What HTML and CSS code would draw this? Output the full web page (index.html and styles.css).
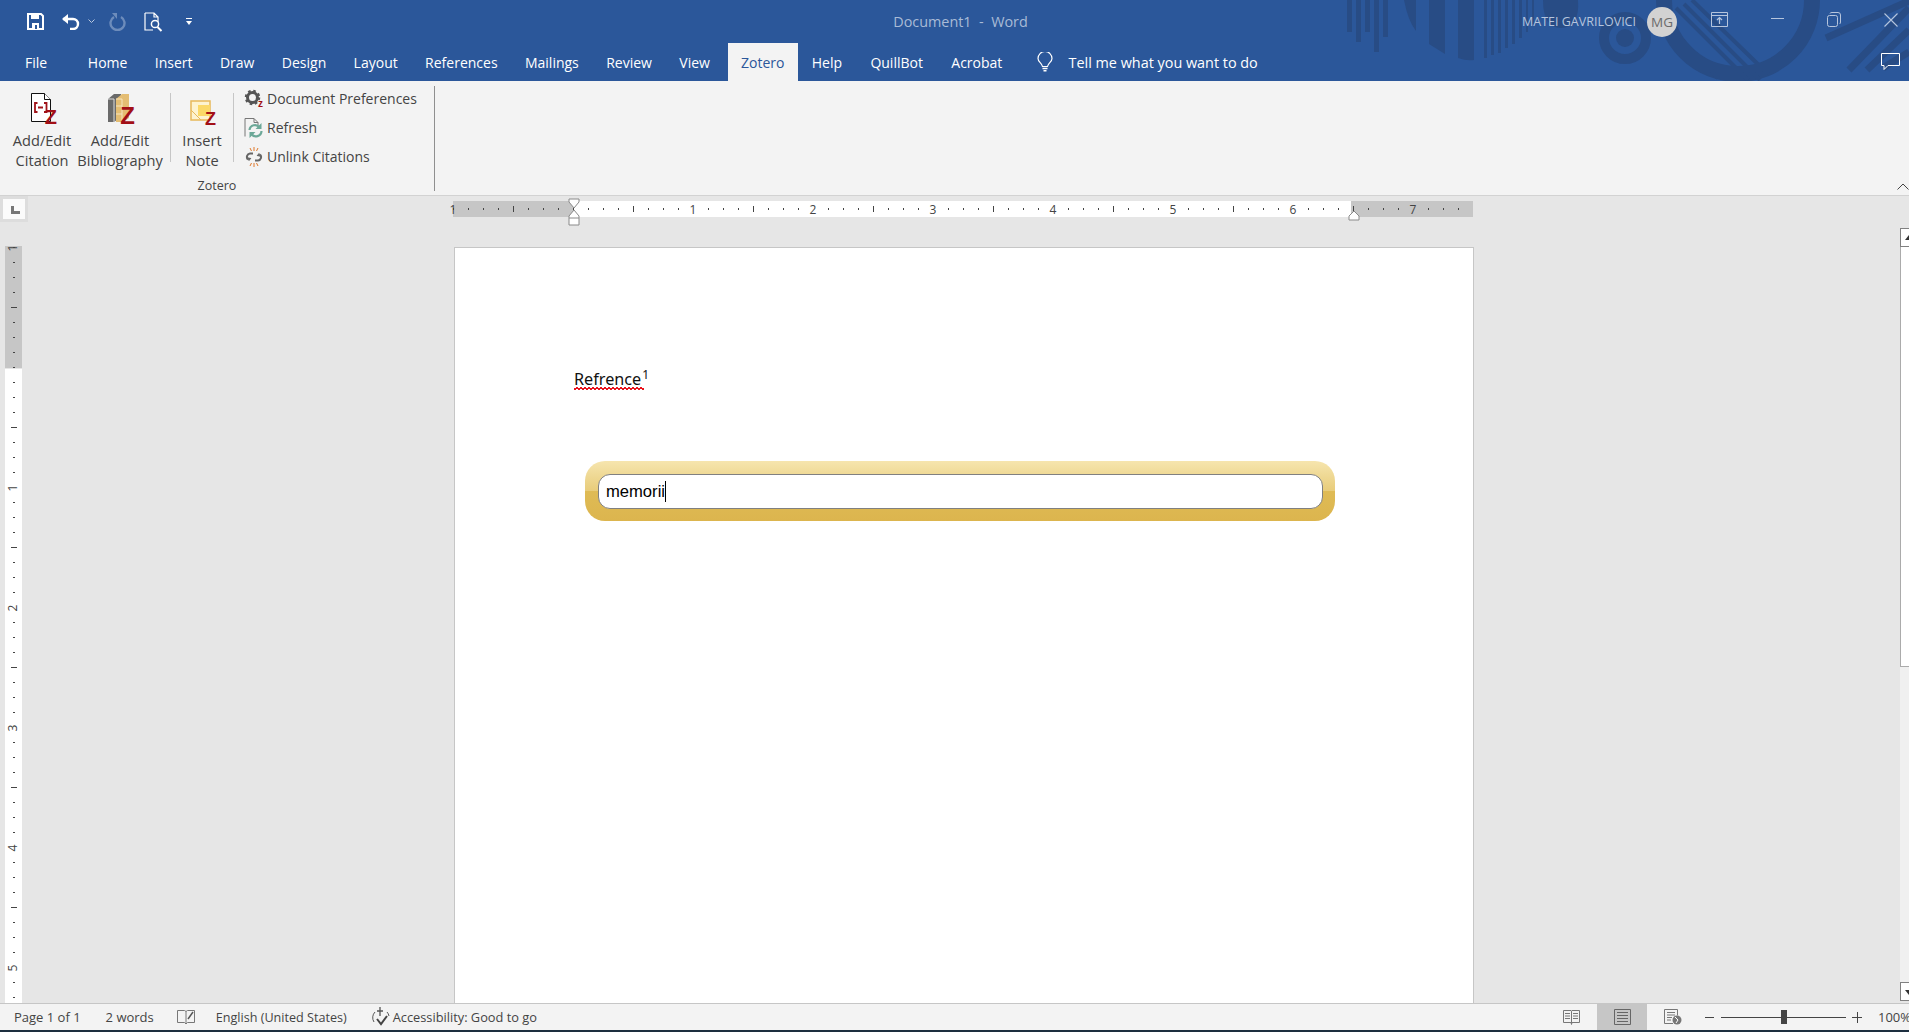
FILE: index.html
```html
<!DOCTYPE html>
<html lang="en">
<head>
  <meta charset="UTF-8" />
  <title>Document1 - Word</title>
  <link rel="stylesheet" href="styles.css">
</head>
<body>

  <!-- Blue header: title bar and tabs -->
  <header class="head">
    <svg class="deco" viewBox="1309 0 600 81" width="600" height="81">
      <g fill="#284c85">
        <rect x="1347" width="5" height="32"/><rect x="1356" width="5" height="42"/>
        <rect x="1365" width="5" height="32"/><rect x="1374" width="5" height="52"/>
        <rect x="1383" width="5" height="37"/>
        <path d="M1404 0h12v31q-8-10-12-31z"/>
        <path d="M1429 0h16v54l-16-10z"/>
        <path d="M1458 0h16v60q-8 1-16-2z"/>
        <rect x="1484" width="3" height="58"/><rect x="1491" width="3" height="55"/>
        <rect x="1498" width="3" height="53"/><rect x="1505" width="3" height="48"/>
        <rect x="1512" width="3" height="44"/><rect x="1519" width="3" height="38"/>
        <rect x="1526" width="2" height="32"/><rect x="1532" width="2" height="24"/>
        <path d="M1543 0h35q2 28-17 28q-18 0-18-28z"/>
        <circle cx="1625" cy="38" r="9"/>
      </g>
      <g fill="none" stroke="#284c85">
        <circle cx="1625" cy="38" r="21" stroke-width="10"/>
        <circle cx="1738" cy="0" r="74" stroke-width="16"/>
        <path stroke-width="4" d="M1676 8l72 72M1684 4l76 76M1692 0l76 74M1680 38l38 40"/>
        <path stroke-width="7" d="M1911 0l-85 38M1909 8l-60 62M1909 30l-42 40M1909 52l-26 16"/>
      </g>
    </svg>

    <div class="titlebar">
      <div class="qat">
        <svg class="qat-save" width="17" height="17" viewBox="0 0 17 17"><path d="M1 1h13l2 2v13H1z" fill="none" stroke="#fff" stroke-width="2"/><rect x="4" y="1" width="8" height="5" fill="#fff"/><rect x="5" y="10" width="7" height="6" fill="#fff"/><rect x="8" y="12" width="2" height="4" fill="#2b579a"/></svg>
        <svg class="qat-undo" width="19" height="16" viewBox="0 0 19 16"><path d="M2 5h10a5 5 0 0 1 0 10H9" fill="none" stroke="#fff" stroke-width="2.4"/><path d="M7 0L1 5l6 5z" fill="#fff"/></svg>
        <svg class="qat-drop" width="7" height="5" viewBox="0 0 7 5"><path d="M.5.5l3 3 3-3" fill="none" stroke="#b9c8df"/></svg>
        <svg class="qat-redo" width="17" height="18" viewBox="0 0 17 18"><path d="M12 4a7 7 0 1 1-7 0" fill="none" stroke="#6d8cbb" stroke-width="2.4"/><path d="M3 0h5v6z" fill="#6d8cbb"/></svg>
        <svg class="qat-print" width="20" height="20" viewBox="0 0 20 20"><path d="M1 1h9l4 4v5M1 1v17h8M10 1v4h4" fill="none" stroke="#fff" stroke-width="1.2"/><circle cx="11" cy="12" r="3.6" fill="none" stroke="#fff" stroke-width="1.5"/><path d="M13.5 15l4 4" stroke="#fff" stroke-width="2"/></svg>
        <svg class="qat-more" width="6" height="8" viewBox="0 0 6 8"><rect width="6" height="1" fill="#fff"/><path d="M0 3h6L3 7z" fill="#fff"/></svg>
      </div>
      <div class="doc-title">Document1&nbsp; - &nbsp;Word</div>
      <div class="win">
        <span class="user">MATEI GAVRILOVICI</span>
        <span class="avatar">MG</span>
        <svg class="win-display" width="17" height="15" viewBox="0 0 17 15"><path d="M.5.5h16v14H.5zM.5 3.5h16" fill="none" stroke="#b6c5dd"/><path d="M8.5 12V6M6 8l2.500-2.500L11 8" fill="none" stroke="#b6c5dd" stroke-width="1.200"/></svg>
        <svg class="win-min" width="13" height="2" viewBox="0 0 13 2"><rect width="13" height="1" fill="#b6c5dd"/></svg>
        <svg class="win-restore" width="14" height="15" viewBox="0 0 14 15"><rect x=".5" y="3.500" width="10" height="11" rx="2" fill="none" stroke="#b6c5dd"/><path d="M3 1.500q0-1 2-1h6q2.500 0 2.500 2.500v7q0 1.500-1 2" fill="none" stroke="#b6c5dd"/></svg>
        <svg class="win-close" width="14" height="14" viewBox="0 0 14 14"><path d="M.5.500l13 13M13.500.500l-13 13" stroke="#b6c5dd" stroke-width="1.100"/></svg>
      </div>
    </div>

    <nav class="tabs">
      <span class="tab tab-file">File</span>
      <span class="tab">Home</span>
      <span class="tab">Insert</span>
      <span class="tab">Draw</span>
      <span class="tab">Design</span>
      <span class="tab">Layout</span>
      <span class="tab">References</span>
      <span class="tab">Mailings</span>
      <span class="tab">Review</span>
      <span class="tab">View</span>
      <span class="tab active">Zotero</span>
      <span class="tab">Help</span>
      <span class="tab">QuillBot</span>
      <span class="tab">Acrobat</span>
      <svg class="bulb" width="16" height="20" viewBox="0 0 16 20"><path d="M5.500 14.500C5 11 1 10 1 6.500a7 7 0 0 1 14 0c0 3.500-4 4.500-4.500 8z" fill="none" stroke="#fff" stroke-width="1.200"/><path d="M5.500 16.500h5M6.500 18.800h3" stroke="#fff" stroke-width="1.400"/></svg>
      <span class="tell">Tell me what you want to do</span>
      <svg class="comment" width="19" height="17" viewBox="0 0 19 17"><path d="M.5.500h18v12H7l-4 4v-4H.5z" fill="none" stroke="#fff"/></svg>
    </nav>
  </header>

  <!-- Zotero ribbon -->
  <section class="ribbon">
    <div class="group">
      <div class="group-row">
        <div class="large large-cite">
          <svg class="large-icon" width="26" height="37" viewBox="0 0 26 37">
            <path d="M.5.500h13l6 6v22H.5z" fill="#fff" stroke="#111"/>
            <path d="M13.500.500v6h6" fill="#fff" stroke="#111"/>
            <path d="M6.500 10h-2.500v9h2.500M13 10h2.500v9H13M7 14.500h5" fill="none" stroke="#a0141a" stroke-width="1.800"/>
            <text class="zed" x="26" y="31" text-anchor="end" font-size="20">Z</text>
          </svg>
          <span>Add/Edit</span><span>Citation</span>
        </div>
        <div class="large large-bib">
          <svg class="large-icon" width="28" height="37" viewBox="0 0 28 37">
            <path d="M1 6l6-5h7v23l-7 5H1z" fill="#6a6a6a"/>
            <path d="M1 6h6v23" fill="none" stroke="#dcdcdc"/>
            <path d="M9 6l6-5h7v24l-6 4H9z" fill="#e4bd73"/>
            <path d="M9 6h6v23M9 13h6M9 21h6" fill="none" stroke="#f6e5c0"/>
            <text class="zed" x="28" y="31" text-anchor="end" font-size="24">Z</text>
          </svg>
          <span>Add/Edit</span><span>Bibliography</span>
        </div>
        <div class="sep"></div>
        <div class="large large-note">
          <svg class="large-icon" width="26" height="29" viewBox="0 0 26 29">
            <rect x="1" y="1" width="19" height="19" fill="#fdf3d0" stroke="#e8b95a" stroke-width="1.500"/>
            <rect x="8" y="5" width="12" height="11" fill="#fbd968"/>
            <path d="M1 10l10 10" stroke="#e8b95a"/>
            <text class="zed" x="26" y="25" text-anchor="end" font-size="18">Z</text>
          </svg>
          <span>Insert</span><span>Note</span>
        </div>
        <div class="sep"></div>
        <div class="small-list">
          <div class="small">
            <svg width="18" height="22" viewBox="0 -2 18 22"><circle cx="7.500" cy="7.500" r="5" fill="none" stroke="#555" stroke-width="3"/><circle cx="7.500" cy="7.500" r="6.500" fill="none" stroke="#555" stroke-width="2.500" stroke-dasharray="2.500 2.600"/><text class="zed" x="18" y="17" text-anchor="end" font-size="10">z</text></svg>
            <span>Document Preferences</span>
          </div>
          <div class="small">
            <svg width="19" height="20" viewBox="0 0 19 20"><path d="M.5 18.500V.500h9l4 4v3M9.500.500v4h4" fill="none" stroke="#777"/><path d="M5 12a5.500 5.500 0 0 1 10-2.500" fill="none" stroke="#6ca898" stroke-width="2.200"/><path d="M17 13a5.500 5.500 0 0 1-10 3" fill="none" stroke="#6ca898" stroke-width="2.200"/><path d="M17 5v6h-6zM5 20v-6h6z" fill="#6ca898"/></svg>
            <span>Refresh</span>
          </div>
          <div class="small">
            <svg width="18" height="20" viewBox="0 0 18 20"><path d="M8 6.500H5a3.500 3.500 0 0 0-2 6M10 13.500h3a3.500 3.500 0 0 0 2-6" fill="none" stroke="#666" stroke-width="2"/><path d="M3 10.500l1 3 2-2.500M15 9.500l-1-3-2 2.500" fill="#666" stroke="#666"/><path d="M9 0v4M9 16v4M5 1l1.500 3M13 1l-1.500 3M5 19l1.500-3M13 19l-1.500-3" stroke="#e0782a"/></svg>
            <span>Unlink Citations</span>
          </div>
        </div>
      </div>
      <div class="group-label">Zotero</div>
    </div>
    <div class="group-sep"></div>
    <svg class="collapse" width="12" height="7" viewBox="0 0 12 7"><path d="M.5 6.500L6 1l5.500 5.500" fill="none" stroke="#444"/></svg>
  </section>

  <!-- Rulers, page and scrollbar -->
  <main class="workspace">
    <div class="vside">
      <div class="corner"><div class="tab-stop"><i></i></div></div>
      <div class="vruler">
        <span class="vnum off"><b>1</b></span>
        <span class="vnum"></span>
        <span class="vnum"><b>1</b></span>
        <span class="vnum"><b>2</b></span>
        <span class="vnum"><b>3</b></span>
        <span class="vnum"><b>4</b></span>
        <span class="vnum"><b>5</b></span>
      </div>
    </div>

    <div class="doc-area">
      <div class="hruler">
        <div class="hnums">
          <span class="off"><b>1</b></span>
          <span></span>
          <span><b>1</b></span>
          <span><b>2</b></span>
          <span><b>3</b></span>
          <span><b>4</b></span>
          <span><b>5</b></span>
          <span><b>6</b></span>
          <span class="off"><b>7</b></span>
        </div>
        <svg class="marker marker-left" width="12" height="28" viewBox="0 0 12 28"><path d="M1 1h10v3L6 10 1 4zM6 12l5 6v9H1v-9zM1 20h10" fill="#fff" stroke="#8a8a8a"/></svg>
        <svg class="marker marker-right" width="12" height="11" viewBox="0 0 12 11"><path d="M6 1l5 5v4H1V6z" fill="#fff" stroke="#8a8a8a"/></svg>
      </div>
      <article class="page">
        <p class="para"><span class="misspelt">Refrence</span><sup>1</sup></p>
        <div class="zotero-bar">
          <div class="zotero-input"><span>memorii</span><i class="caret"></i></div>
        </div>
      </article>
    </div>

    <div class="vscroll">
      <div class="sb-btn sb-up"></div>
      <div class="sb-thumb"></div>
      <div class="sb-track"></div>
      <div class="sb-btn sb-down"></div>
    </div>
  </main>

  <!-- Status bar -->
  <footer class="status">
    <span class="st-page">Page 1 of 1</span>
    <span class="st-words">2 words</span>
    <svg class="st-proof" width="18" height="16" viewBox="0 0 18 16"><path d="M.5 1.500h7l1.500 1 1.500-1h7v12h-7L9 15l-1.500-1.500h-7zM9 2.500V15" fill="none" stroke="#777"/><path d="M11 10l5-7" stroke="#555" stroke-width="1.500"/></svg>
    <span class="st-lang">English (United States)</span>
    <svg class="st-access" width="20" height="20" viewBox="0 0 20 20"><path d="M4 5a8 8 0 0 0-1 10M16 5a8 8 0 0 1 2 4" fill="none" stroke="#555"/><path d="M9 0v9M6 4h6" stroke="#555" stroke-width="1.300"/><path d="M6 12l4 5 6-8" fill="none" stroke="#444" stroke-width="2"/></svg>
    <span class="st-acc-text">Accessibility: Good to go</span>

    <div class="st-right">
      <svg width="17" height="15" viewBox="0 0 17 15"><path d="M.5.500h7.500l.5 1 .5-1h7.500v12h-7.500l-.5 2-.5-2H.5zM8.500 1.500v12M2 3.500h5M2 6h5M2 8.500h5M10 3.500h5M10 6h5M10 8.500h5" fill="none" stroke="#777"/></svg>
      <div class="view-active"><svg width="17" height="16" viewBox="0 0 17 16"><path d="M.5.500h16v15H.5zM3 3.500h11M3 6.500h11M3 9.500h11M3 12.500h11" fill="none" stroke="#666"/></svg></div>
      <svg width="18" height="16" viewBox="0 0 18 16"><path d="M9 14.500H.5V.500h13v6M3 3.500h8M3 6h8M3 8.500h5M3 11h4" fill="none" stroke="#777"/><circle cx="13" cy="11" r="4.500" fill="#777"/><path d="M11 8l3 3-2 3" fill="none" stroke="#fff"/></svg>
      <div class="zoom">
        <i class="zoom-minus"></i>
        <div class="slider"><i></i></div>
        <i class="zoom-plus"></i>
      </div>
      <span class="st-zoom">100%</span>
    </div>
  </footer>
  <div class="taskbar-edge"></div>

</body>
</html>
```

FILE: styles.css
```css
/* General styling */
* {
  box-sizing: border-box;
}

html,
body {
  height: 100%;
}

body {
  margin: 0;
  display: flex;
  flex-direction: column;
  width: 1909px;
  height: 1032px;
  overflow: hidden;
  font-family: "Open Sans", "Noto Sans", sans-serif;
  font-size: 13.5px;
  color: #444;
  background: #e6e6e6;
}

svg {
  display: block;
  flex: none;
}

/* Header */
.head {
  position: relative;
  height: 81px;
  flex: none;
  background: #2b579a;
  overflow: hidden;
}

.deco {
  position: absolute;
  top: 0;
  right: 0;
}

.titlebar {
  position: relative;
  display: flex;
  align-items: center;
  height: 43px;
}

.qat {
  flex: 1;
  display: flex;
  align-items: center;
  padding-left: 27px;
}

.qat-undo { margin-left: 17px; }
.qat-drop { margin-left: 8px; }
.qat-redo { margin-left: 14px; }
.qat-print { margin-left: 18px; }
.qat-more { margin-left: 22px; }

.doc-title {
  margin-right: 15px;
  font-size: 14.4px;
  color: #a9bbd6;
}

.win {
  flex: 1;
  display: flex;
  align-items: center;
  justify-content: flex-end;
}

.user {
  font-size: 12.5px;
  color: #b6c5dd;
}

.avatar {
  display: flex;
  align-items: center;
  justify-content: center;
  width: 30px;
  height: 30px;
  margin-left: 11px;
  border-radius: 50%;
  background: #d2d2d2;
  color: #6b6b6b;
  font-size: 13.5px;
}

.win-display { margin: -4px 0 0 34px; }
.win-min { margin: -6px 0 0 43px; }
.win-restore { margin: -4px 0 0 43px; }
.win-close { margin: -4px 11px 0 43px; }

.tabs {
  position: relative;
  display: flex;
  align-items: stretch;
  height: 38px;
  color: #fff;
  font-size: 14px;
}

.tab {
  display: flex;
  align-items: center;
  padding: 0 13.7px;
}

.tab-file {
  padding: 0 27px 0 25px;
}

.tab.active {
  background: #f3f3f3;
  color: #2b579a;
  margin-left: 4.5px;
  padding: 0 13px;
}

.tab.active ~ .tab {
  padding: 0 14.2px;
}

.bulb {
  align-self: center;
  margin-left: 20px;
}

.tell {
  align-self: center;
  margin-left: 16px;
  font-size: 14.4px;
}

.comment {
  align-self: center;
  margin: -1px 9px 0 auto;
}

/* Ribbon */
.ribbon {
  display: flex;
  flex: none;
  height: 115px;
  background: #f3f3f3;
  border-bottom: 1px solid #d2d2d2;
}

.group {
  width: 434px;
  display: flex;
  flex-direction: column;
}

.group-row {
  display: flex;
  flex: none;
  height: 95px;
}

.large {
  display: flex;
  flex-direction: column;
  align-items: center;
  margin-top: 5px;
  line-height: 20px;
  font-size: 14.6px;
  white-space: nowrap;
}

.large-cite { width: 76px; margin-left: 4px; }
.large-bib { width: 80px; }
.large-note { width: 62px; }

.large-cite .large-icon { margin: 7px 0 0 3px; }
.large-bib .large-icon { margin: 7px 0 0 2px; }
.large-note .large-icon { margin: 14px 0 0.5px 2px; }

.sep {
  width: 1px;
  height: 69px;
  margin-top: 12px;
  background: #c6c6c6;
}

.large-bib + .sep {
  margin-left: 10px;
}

.small-list {
  margin: 3px 0 0 10px;
}

.small {
  display: flex;
  align-items: center;
  height: 29px;
  font-size: 14px;
  white-space: nowrap;
}

.small svg {
  width: 20px;
}

.small span {
  margin-left: 3px;
}

.group-label {
  line-height: 19px;
  text-align: center;
  font-size: 12.5px;
}

.group-sep {
  width: 1px;
  height: 105px;
  margin-top: 5px;
  background: #8f8f8f;
}

.collapse {
  margin: 102px 0 0 auto;
}

.zed {
  font-family: "Liberation Sans", sans-serif;
  font-weight: bold;
  fill: #a20f16;
}

/* Workspace */
.workspace {
  display: flex;
  flex: 1;
  min-height: 0;
}

.vside {
  width: 28px;
  flex: none;
  display: flex;
  flex-direction: column;
}

.corner {
  flex: none;
  height: 26px;
  padding: 3px;
  background: #dddddd;
}

.tab-stop {
  position: relative;
  width: 22px;
  height: 20px;
  background: #fbfbfb;
}

.tab-stop i {
  position: absolute;
  left: 8px;
  top: 7px;
  width: 9px;
  height: 8px;
  border-left: 3px solid #777;
  border-bottom: 3px solid #777;
}

/* ticks are drawn as repeating gradients squeezed into a thin strip */
.vruler {
  flex: 1;
  min-height: 0;
  display: flex;
  flex-direction: column;
  width: 17px;
  margin: 24px 0 0 5px;
  background:
    repeating-linear-gradient(180deg, #444 0 1px, transparent 1px 15px) center 1px / 2px 100% no-repeat,
    repeating-linear-gradient(180deg, #444 0 1px, transparent 1px 120px) center 61px / 6px 100% no-repeat,
    linear-gradient(180deg, #c6c6c6 122px, #e6e6e6 122px 123px, #fff 123px);
}

.vnum {
  display: flex;
  flex: none;
  align-items: center;
  justify-content: center;
  height: 120px;
  font-size: 12px;
}

.vnum:first-child {
  margin-top: -58px;
}

.vnum b {
  font-weight: normal;
  line-height: 1;
  padding: 0 1px;
  background: #fff;
  transform: rotate(-90deg);
}

.vnum.off b {
  background: none;
}

.doc-area {
  flex: 1;
  min-width: 0;
  display: flex;
  flex-direction: column;
}

.hruler {
  position: relative;
  flex: none;
  width: 1020px;
  height: 16px;
  margin: 5px 0 0 425px;
  background:
    repeating-linear-gradient(90deg, #444 0 1px, transparent 1px 15px) 0 center / 100% 2px no-repeat,
    repeating-linear-gradient(90deg, #444 0 1px, transparent 1px 120px) 60px center / 100% 6px no-repeat,
    linear-gradient(90deg, #c6c6c6 120px, #fff 120px 898px, #c6c6c6 898px);
}

.hnums {
  display: flex;
  height: 16px;
  margin-left: -60px;
  line-height: 17px;
  font-size: 12px;
}

.hnums span {
  display: flex;
  justify-content: center;
  width: 120px;
  flex: none;
}

.hnums b {
  font-weight: normal;
  padding: 0 1px;
  background: #fff;
}

.hnums .off b {
  background: #c6c6c6;
}

.hnums span:first-child b {
  background: none;
}

.marker {
  position: absolute;
}

.marker-left {
  left: 115px;
  top: -3px;
}

.marker-right {
  left: 895px;
  top: 9px;
}

.page {
  flex: 1;
  width: 1020px;
  margin: 30px 0 0 426px;
  background: #fff;
  border: 1px solid #c6c6c6;
  border-bottom: none;
}

.para {
  margin: 116px 0 0 119px;
  font-family: "Noto Sans", sans-serif;
  font-size: 16.2px;
  line-height: 30px;
  color: #111;
}

.para sup {
  margin-left: -2px;
  font-size: 12px;
  line-height: 0;
}

/* red squiggle under a misspelt word */
.misspelt {
  padding-right: 3px;
  background:
    linear-gradient(135deg, transparent 40%, #e8141e 40% 65%, transparent 65%) 0 100% / 4px 3px repeat-x,
    linear-gradient(45deg, transparent 40%, #e8141e 40% 65%, transparent 65%) 2px 100% / 4px 3px repeat-x;
}

.zotero-bar {
  width: 750px;
  height: 60px;
  margin: 67px 0 0 130px;
  padding: 13px;
  border-radius: 20px;
  background: linear-gradient(180deg, #f6e5ae 0%, #e8cc7a 50%, #dfbb55 50%, #dcb54e 100%);
}

.zotero-input {
  display: flex;
  align-items: center;
  width: 725px;
  height: 35px;
  padding-left: 7px;
  border: 1px solid #808080;
  border-radius: 12px;
  background: #fff;
  font-family: "Liberation Sans", sans-serif;
  font-size: 16.6px;
  color: #000;
}

.caret {
  width: 1px;
  height: 21px;
  background: #000;
}

.vscroll {
  width: 9px;
  flex: none;
  display: flex;
  flex-direction: column;
  margin-top: 32px;
  margin-bottom: 2px;
  background: #f0f0f0;
}

.sb-btn {
  position: relative;
  flex: none;
  height: 19px;
  border: 1px solid #808080;
  border-right: none;
  background: #fff;
}

.sb-up::after,
.sb-down::after {
  content: "";
  position: absolute;
  left: 4px;
  border-left: 4px solid transparent;
  border-right: 4px solid transparent;
}

.sb-up::after {
  top: 6px;
  border-bottom: 5px solid #333;
}

.sb-down::after {
  top: 7px;
  border-top: 5px solid #333;
}

.sb-thumb {
  flex: none;
  height: 420px;
  background: #fff;
  border-left: 1px solid #ababab;
  border-bottom: 1px solid #ababab;
}

.sb-track {
  flex: 1;
}

/* Status bar */
.status {
  display: flex;
  align-items: center;
  flex: none;
  height: 27px;
  background: #f3f3f3;
  border-top: 1px solid #c6c6c6;
  font-size: 13px;
  white-space: nowrap;
}

.st-page { margin-left: 14px; }
.st-words { margin-left: 25px; }
.st-proof { margin-left: 23px; }
.st-lang { margin-left: 21px; font-size: 12.6px; }
.st-access { margin-left: 24px; }
.st-acc-text { margin-left: 2px; font-size: 12.8px; }

.st-right {
  display: flex;
  align-items: center;
  align-self: stretch;
  margin-left: auto;
}

.view-active {
  display: flex;
  align-items: center;
  justify-content: center;
  width: 50px;
  margin: 0 17px;
  align-self: stretch;
  background: #c6c6c6;
}

.zoom {
  display: flex;
  align-items: center;
  margin-left: 23px;
}

.zoom-minus {
  width: 9px;
  height: 1px;
  background: #444;
}

.slider {
  position: relative;
  width: 125px;
  height: 1px;
  margin: 0 6px 0 7px;
  background: #444;
}

.slider i {
  position: absolute;
  left: 60px;
  top: -7px;
  width: 6px;
  height: 14px;
  background: #444;
}

.zoom-plus {
  position: relative;
  width: 10px;
  height: 1px;
  background: #444;
}

.zoom-plus::after {
  content: "";
  position: absolute;
  left: 4.5px;
  top: -5px;
  width: 1px;
  height: 11px;
  background: #444;
}

.st-zoom {
  margin-left: 16px;
  width: 31px;
}

.taskbar-edge {
  flex: none;
  height: 2px;
  background: #1d2f3f;
}
```
